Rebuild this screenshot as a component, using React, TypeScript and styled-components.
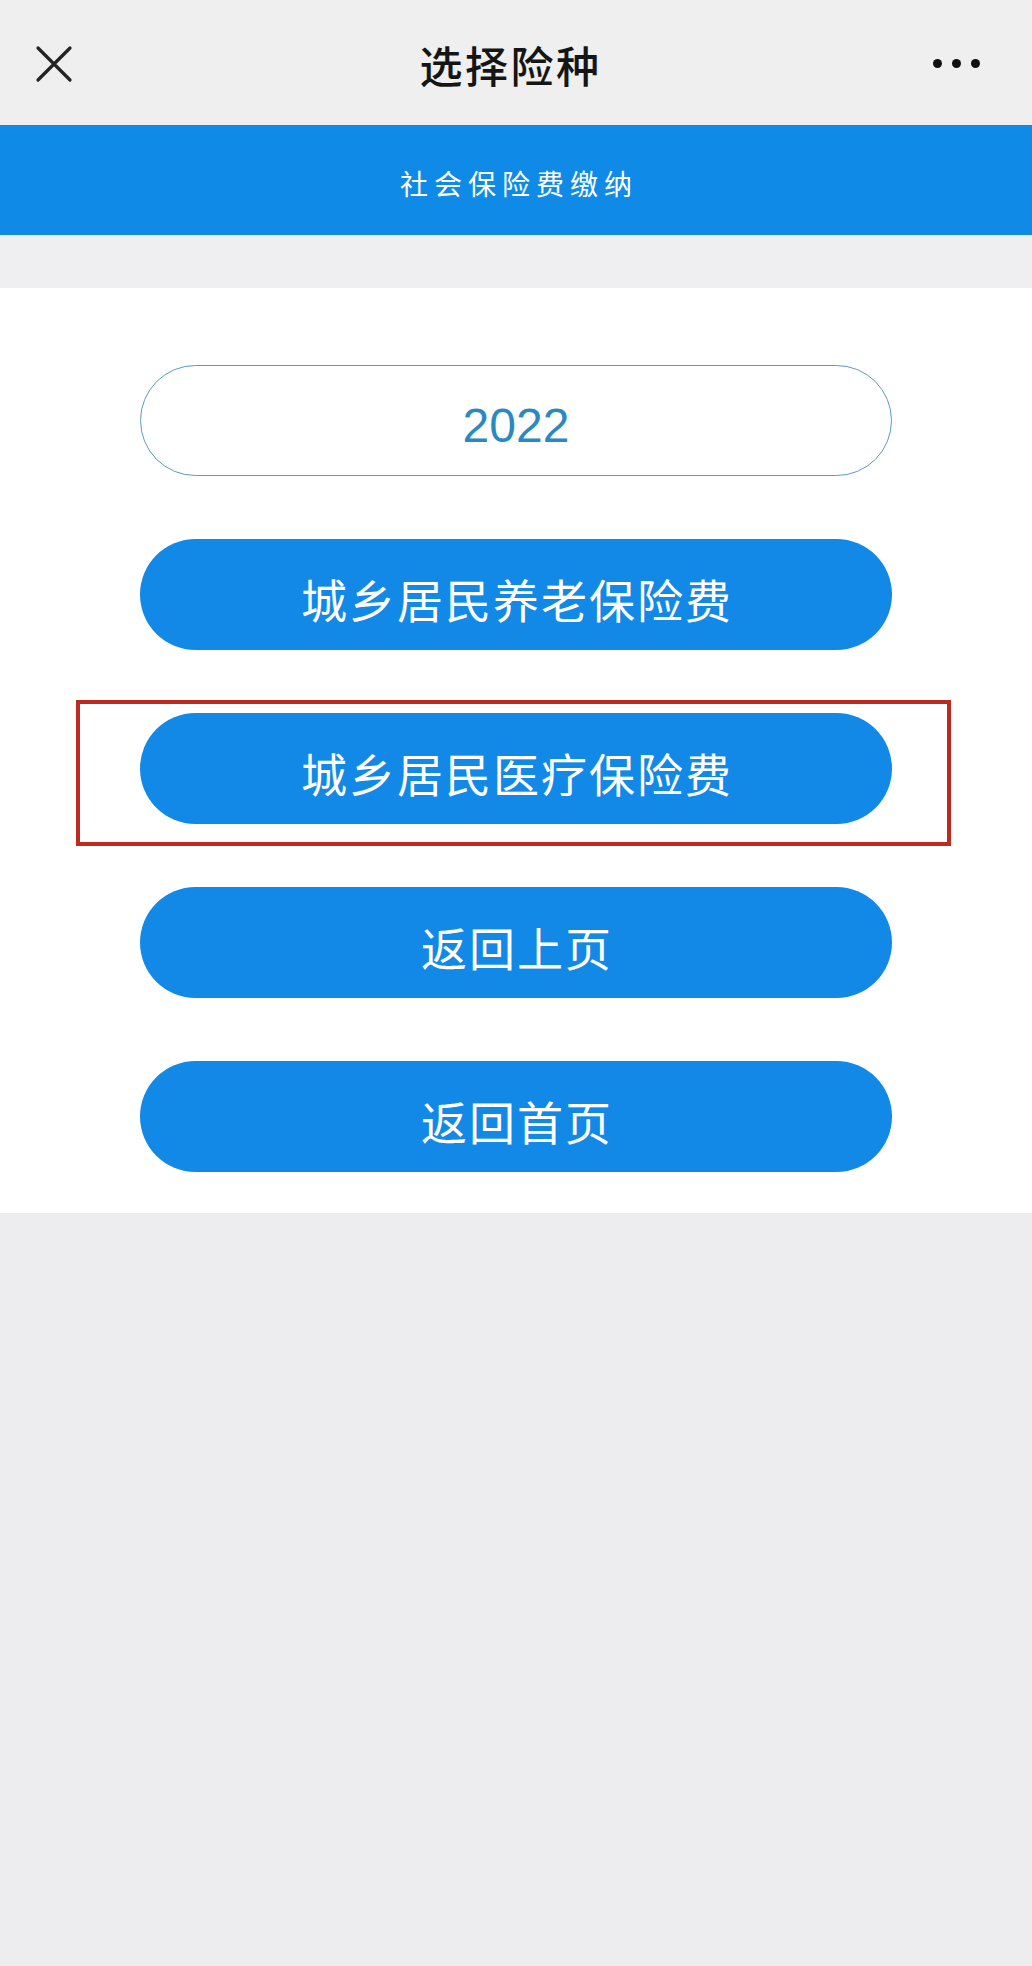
import React from 'react';
import styled, { createGlobalStyle } from 'styled-components';

const GlobalStyle = createGlobalStyle`
  html, body {
    margin: 0;
    padding: 0;
    background-color: #ededf0;
    font-family: "Noto Sans CJK SC", "Noto Sans", sans-serif;
  }
`;

const Page = styled.div`
  min-height: 1966px;
  background-color: #ededf0;
`;

const NavBar = styled.header`
  height: 125px;
  background-color: #efefef;
  display: grid;
  grid-template-columns: 1fr auto 1fr;
  align-items: center;
  padding: 0 52px 0 35px;
  box-sizing: border-box;
`;

const CloseButton = styled.button`
  justify-self: start;
  width: 38px;
  height: 38px;
  padding: 0;
  border: none;
  background: none;
  display: flex;
  align-items: center;
  justify-content: center;
  margin-top: 2px;
  cursor: pointer;
`;

const Title = styled.h1`
  margin: 0 0 0 6px;
  font-size: 43px;
  font-weight: 500;
  letter-spacing: 2.5px;
  color: #151515;
  line-height: 1;
  padding-top: 4px;
`;

const MoreButton = styled.button`
  justify-self: end;
  display: flex;
  gap: 10px;
  padding: 0;
  border: none;
  background: none;
  cursor: pointer;
  margin-top: 2px;
`;

const Dot = styled.span`
  width: 9px;
  height: 9px;
  border-radius: 50%;
  background-color: #111;
`;

const Banner = styled.div`
  height: 110px;
  background-color: #0f8ae6;
  display: flex;
  align-items: center;
  justify-content: center;
  color: #ffffff;
  font-size: 28px;
  letter-spacing: 6px;
  padding: 6px 0 0 6px;
  box-sizing: border-box;
`;

const Spacer = styled.div`
  height: 53px;
  background-color: #efeff1;
`;

const Card = styled.section`
  background-color: #ffffff;
  padding: 77px 0 41px;
  display: flex;
  flex-direction: column;
  align-items: center;
  gap: 63px;
`;

const Highlight = styled.div`
  position: relative;

  &::after {
    content: '';
    position: absolute;
    top: -13px;
    bottom: -22px;
    left: -64px;
    right: -59px;
    border: 4px solid #bd2a20;
    pointer-events: none;
  }
`;

const PillButton = styled.button<{ $outline?: boolean }>`
  width: 752px;
  height: 111px;
  border-radius: 56px;
  box-sizing: border-box;
  display: flex;
  align-items: center;
  justify-content: center;
  padding: ${(p) => (p.$outline ? '10px 0 0 0' : '6px 0 0 2px')};
  cursor: pointer;
  font-family: ${(p) =>
    p.$outline ? '"Liberation Sans", Arial, sans-serif' : '"Noto Sans CJK SC", sans-serif'};
  font-size: ${(p) => (p.$outline ? '48px' : '46px')};
  letter-spacing: ${(p) => (p.$outline ? '0' : '2px')};
  color: ${(p) => (p.$outline ? '#2b89c2' : '#ffffff')};
  background-color: ${(p) => (p.$outline ? '#ffffff' : '#1289e6')};
  border: ${(p) => (p.$outline ? '1.5px solid #5b9cbd' : 'none')};
`;

const CloseIcon = () => (
  <svg width="38" height="38" viewBox="0 0 38 38">
    <path d="M3 3 L35 35 M35 3 L3 35" stroke="#232323" strokeWidth="3.2" strokeLinecap="round" />
  </svg>
);

const App: React.FC = () => {
  return (
    <Page>
      <GlobalStyle />
      <NavBar>
        <CloseButton aria-label="关闭">
          <CloseIcon />
        </CloseButton>
        <Title>选择险种</Title>
        <MoreButton aria-label="更多">
          <Dot />
          <Dot />
          <Dot />
        </MoreButton>
      </NavBar>

      <Banner>社会保险费缴纳</Banner>
      <Spacer />

      <Card>
        <PillButton $outline>2022</PillButton>
        <PillButton>城乡居民养老保险费</PillButton>
        <Highlight>
          <PillButton>城乡居民医疗保险费</PillButton>
        </Highlight>
        <PillButton>返回上页</PillButton>
        <PillButton>返回首页</PillButton>
      </Card>
    </Page>
  );
};

export default App;
